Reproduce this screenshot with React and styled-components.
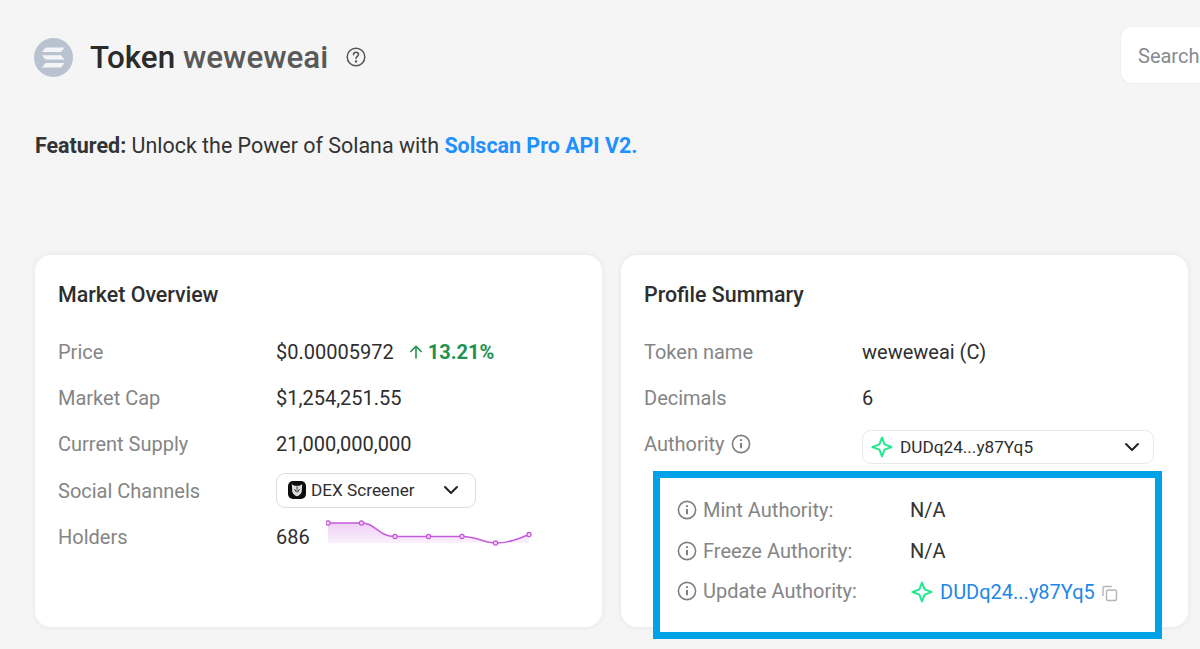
import React from "react";
import styled, { createGlobalStyle } from "styled-components";

const GlobalStyle = createGlobalStyle`
  html, body {
    margin: 0;
    padding: 0;
    background: #f5f5f5;
    overflow: hidden;
  }
  * { box-sizing: border-box; }
`;

const Page = styled.div`
  position: relative;
  width: 1200px;
  height: 649px;
  overflow: hidden;
  padding: 30px 0 0 35px;
  background: #f5f5f5;
  font-family: Roboto, "Liberation Sans", sans-serif;
  color: #2b2b2b;
`;

const Header = styled.header`
  display: flex;
  align-items: center;
  height: 54px;
  svg:first-child { margin-left: -1px; }
`;

const Title = styled.h1`
  margin: 0 0 0 17px;
  font-size: 31.4px;
  font-weight: 500;
  color: #2b2b2b;
  span { color: #595959; }
`;

const HelpWrap = styled.span`
  display: flex;
  margin-left: 19px;
  color: #555;
`;

const SearchBox = styled.div`
  margin: -4px 0 0 auto;
  flex: none;
  width: 80px;
  height: 58px;
  display: flex;
  align-items: center;
  padding: 2px 0 0 17px;
  background: #fff;
  border: 1px solid #efefef;
  border-right: none;
  border-radius: 12px 0 0 12px;
  font-size: 20px;
  color: #858a90;
`;

const Featured = styled.p`
  margin: 47px 0 0;
  font-size: 21.44px;
  line-height: 30px;
  color: #333;
  b { font-weight: 700; }
  a { color: #1e90ff; font-weight: 700; text-decoration: none; }
`;

const Cards = styled.div`
  display: grid;
  grid-template-columns: 567px 567px;
  gap: 19px;
  margin-top: 94px;
`;

const Card = styled.section`
  height: 372px;
  padding: 25px 23px;
  background: #fff;
  border-radius: 16px;
  box-shadow: 0 0 6px rgba(0, 0, 0, 0.07);
`;

const CardTitle = styled.h2`
  margin: 0 0 19px;
  font-size: 21.4px;
  line-height: 30px;
  font-weight: 500;
  color: #2e2e2e;
`;

const Row = styled.div`
  display: grid;
  grid-template-columns: 218px 1fr;
  align-items: center;
  height: 46.2px;
  font-size: 20px;
  color: #2e2e2e;
`;

const Label = styled.div`
  display: flex;
  align-items: center;
  gap: 6px;
  color: #858585;
`;

const Value = styled.div`
  display: flex;
  align-items: center;
`;

const Change = styled.span`
  display: flex;
  align-items: center;
  margin-left: 13px;
  gap: 3px;
  font-weight: 700;
  color: #22924f;
`;

const Select = styled.div`
  display: flex;
  align-items: center;
  width: ${(p) => p.$width}px;
  height: ${(p) => p.$height}px;
  margin-top: ${(p) => p.$shift}px;
  padding: 0 ${(p) => p.$right}px 0 ${(p) => p.$left}px;
  gap: ${(p) => p.$gap}px;
  background: #fff;
  border: 1px solid ${(p) => p.$line};
  border-radius: 9px;
  font-size: 17.2px;
  color: #2e2e2e;
  svg:last-child { margin-left: auto; }
`;

const Holders = styled.div`
  display: flex;
  align-items: center;
  gap: 16px;
  svg { margin-bottom: 6px; }
`;

const Highlight = styled.div`
  position: absolute;
  left: 653px;
  top: 471px;
  width: 509px;
  height: 168px;
  padding: 12px 0 0 17px;
  background: #fff;
  border: 7px solid #00a2e8;
`;

const AuthRow = styled.div`
  display: grid;
  grid-template-columns: 233px 1fr;
  align-items: center;
  height: 40.5px;
  font-size: 20px;
  color: #333;
`;

const AuthLink = styled.span`
  display: flex;
  align-items: center;
  gap: 6px;
  margin-top: 2px;
  color: #2187e6;
  svg:last-child { margin-left: 0; margin-top: 2px; color: #b5b5b5; }
`;

const Info = ({ size = 20 }) => (
  <svg width={size} height={size} viewBox="0 0 20 20" fill="none" stroke="#808080" strokeWidth="1.6">
    <circle cx="10" cy="10" r="8.6" />
    <path d="M10 9v5.2" strokeWidth="2" />
    <circle cx="10" cy="6.2" r="1.1" fill="#808080" stroke="none" />
  </svg>
);

const Spark = ({ size = 24 }) => (
  <svg width={size} height={size} viewBox="0 0 24 24" fill="none" stroke="#22e88f" strokeWidth="2" strokeLinejoin="round">
    <path d="M12 2.500L14.600 9.400 21.500 12 14.600 14.600 12 21.500 9.400 14.600 2.500 12 9.400 9.400Z" />
  </svg>
);

const Chevron = () => (
  <svg width="16" height="10" viewBox="0 0 16 10" fill="none" stroke="#222" strokeWidth="2" strokeLinecap="round" strokeLinejoin="round">
    <path d="M2 2l6 6 6-6" />
  </svg>
);

const SolanaLogo = () => (
  <svg width="39" height="39" viewBox="0 0 39 39">
    <circle cx="19.500" cy="19.500" r="19.500" fill="#b9c3d0" />
    <g fill="#f3f5f7">
      <path d="M11.500 9.500h19l-3.500 4.500h-19z" />
      <path d="M8 17.300h19l3.500 4.200h-19z" />
      <path d="M11.500 25h19l-3.500 4.500h-19z" />
    </g>
  </svg>
);

const DexLogo = () => (
  <svg width="18" height="18" viewBox="0 0 18 18">
    <rect width="18" height="18" rx="5" fill="#0c0c0c" />
    <path d="M3.800 3.200l2.700 1.600h5l2.700-1.600-.4 5.800c.4 3-2.300 5.600-4.800 6.200-2.500-.6-5.200-3.200-4.800-6.200z" fill="#dcdcdc" />
    <path d="M5.800 7.800l2.700 1.700v2.300zM12.200 7.800l-2.700 1.700v2.300z" fill="#111" />
    <path d="M9 5.200v3.500" stroke="#111" strokeWidth="0.8" />
  </svg>
);

const HolderChart = () => {
  const points = [
    [0, 4], [33.500, 4], [67, 17.500], [100.500, 17.500], [134, 17.500], [167.500, 24], [201, 15.500],
  ];
  const line =
    "M0 4H33.500C48 4 50 17.500 67 17.500H134C150 17.500 155 24 167.500 24C180 24 190 20 201 15.500";
  return (
    <svg width="206" height="30" viewBox="-2 0 206 30">
      <defs>
        <linearGradient id="holderFill" x1="0" y1="0" x2="0" y2="1">
          <stop offset="0" stopColor="#c653dc" stopOpacity="0.28" />
          <stop offset="1" stopColor="#c653dc" stopOpacity="0.08" />
        </linearGradient>
      </defs>
      <path d={`${line}V24H0Z`} fill="url(#holderFill)" />
      <path d={line} fill="none" stroke="#c65bdc" strokeWidth="1.500" />
      {points.map(([x, y]) => (
        <circle key={x} cx={x} cy={y} r="2.100" fill="#f3d8f8" stroke="#c14fd8" strokeWidth="1.100" />
      ))}
    </svg>
  );
};

const CopyIcon = () => (
  <svg width="17" height="17" viewBox="0 0 17 17" fill="none" stroke="currentColor" strokeWidth="1.400">
    <rect x="5.500" y="5" width="10" height="10.500" rx="1.800" />
    <path d="M2 11V3.500C2 2.400 2.700 1.500 4 1.500h7" />
  </svg>
);

const marketRows = [
  ["Price", "$0.00005972"],
  ["Market Cap", "$1,254,251.55"],
  ["Current Supply", "21,000,000,000"],
];

export default function App() {
  return (
    <Page>
      <GlobalStyle />
      <Header>
        <SolanaLogo />
        <Title>
          Token <span>weweweai</span>
        </Title>
        <HelpWrap>
          <svg width="20" height="20" viewBox="0 0 20 20" fill="none" stroke="currentColor" strokeWidth="1.500" strokeLinecap="round">
            <circle cx="10" cy="10" r="8.800" />
            <path d="M7.500 7.800c0-1.500 1.100-2.500 2.500-2.500s2.500 1 2.500 2.300c0 1.700-2.500 1.900-2.500 3.900" />
            <circle cx="10" cy="14.500" r="0.500" />
          </svg>
        </HelpWrap>
        <SearchBox>Search</SearchBox>
      </Header>

      <Featured>
        <b>Featured:</b> Unlock the Power of Solana with <a href="#api">Solscan Pro API V2.</a>
      </Featured>

      <Cards>
        <Card>
          <CardTitle>Market Overview</CardTitle>
          {marketRows.map(([label, value], i) => (
            <Row key={label}>
              <Label>{label}</Label>
              <Value>
                {value}
                {i === 0 && (
                  <Change>
                    <svg width="18" height="18" viewBox="0 0 18 18" fill="none" stroke="currentColor" strokeWidth="1.600" strokeLinecap="round" strokeLinejoin="round">
                      <path d="M9 15V3.500M3.800 8.500L9 3.300l5.200 5.200" />
                    </svg>
                    13.21%
                  </Change>
                )}
              </Value>
            </Row>
          ))}
          <Row>
            <Label>Social Channels</Label>
            <Select $width={200} $height={35} $shift={-1} $left={11} $right={16} $gap={5} $line="#dcdcdc">
              <DexLogo />
              DEX Screener
              <Chevron />
            </Select>
          </Row>
          <Row>
            <Label>Holders</Label>
            <Holders>
              686
              <HolderChart />
            </Holders>
          </Row>
        </Card>

        <Card>
          <CardTitle>Profile Summary</CardTitle>
          <Row>
            <Label>Token name</Label>
            <Value>weweweai (C)</Value>
          </Row>
          <Row>
            <Label>Decimals</Label>
            <Value>6</Value>
          </Row>
          <Row>
            <Label>
              Authority <Info />
            </Label>
            <Select $width={292} $height={34} $shift={5} $left={7} $right={13} $gap={6} $line="#e8e8e8">
              <Spark />
              DUDq24...y87Yq5
              <Chevron />
            </Select>
          </Row>
        </Card>
      </Cards>

      <Highlight>
        <AuthRow>
          <Label><Info />Mint Authority:</Label>
          <Value>N/A</Value>
        </AuthRow>
        <AuthRow>
          <Label><Info />Freeze Authority:</Label>
          <Value>N/A</Value>
        </AuthRow>
        <AuthRow>
          <Label><Info />Update Authority:</Label>
          <AuthLink>
            <Spark />
            DUDq24...y87Yq5
            <CopyIcon />
          </AuthLink>
        </AuthRow>
      </Highlight>
    </Page>
  );
}
